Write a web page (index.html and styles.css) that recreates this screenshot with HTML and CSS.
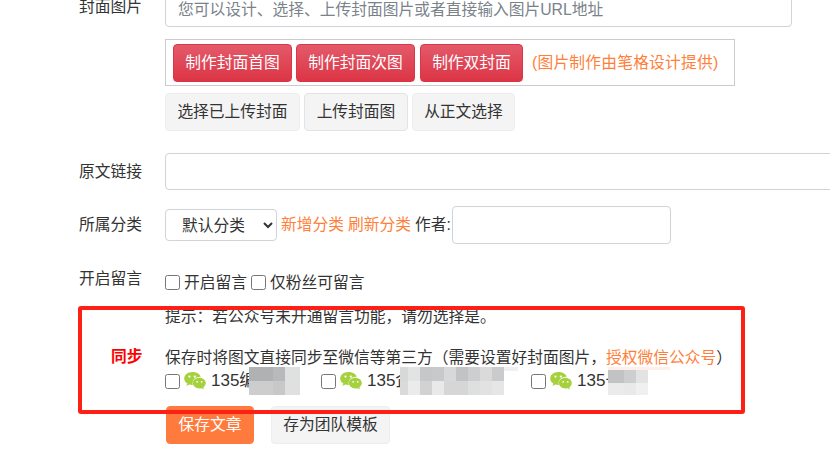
FILE: index.html
```html
<!DOCTYPE html>
<html lang="zh-CN">
<head>
<meta charset="utf-8">
<title>封面与同步设置</title>
<link rel="stylesheet" href="styles.css">
</head>
<body>
<svg class="defs" width="0" height="0" aria-hidden="true">
  <symbol id="wechat" viewBox="0 0 22 18">
    <path fill="#a5d13f" d="M8.3 0C3.8 0 .2 2.9.2 6.5c0 2.1 1.2 3.9 3.1 5.1l-.8 2.4 2.9-1.4c.9.2 1.9.4 2.9.4h.6a6 6 0 0 1-.3-1.8c0-3.6 3.4-6.4 7.6-6.4h.5C15.900 2 12.400 0 8.300 0Z"/>
    <path fill="#a5d13f" d="M21.800 11.100c0-3-3-5.400-6.400-5.400-3.700 0-6.500 2.400-6.500 5.400s2.800 5.400 6.500 5.400c.8 0 1.500-.1 2.300-.3l2.200 1.300-.6-2.100c1.500-1.100 2.500-2.600 2.500-4.300Z"/>
    <circle cx="5.500" cy="4.600" r="1.100" fill="#fff"/><circle cx="10.800" cy="4.600" r="1.100" fill="#fff"/>
    <circle cx="13.200" cy="9.800" r=".9" fill="#fff"/><circle cx="17.700" cy="9.800" r=".9" fill="#fff"/>
  </symbol>
</svg>
<main class="form">
  <div class="row row-cover">
    <label class="label label-top">封面图片</label>
    <div class="field">
      <input class="input input-cover" type="text" placeholder="您可以设计、选择、上传封面图片或者直接输入图片URL地址">
      <div class="maker">
        <button class="btn btn-red btn-first">制作封面首图</button>
        <button class="btn btn-red btn-second">制作封面次图</button>
        <button class="btn btn-red btn-double">制作双封面</button>
        <span class="orange maker-note">(图片制作由笔格设计提供)</span>
      </div>
      <div class="uploads">
        <button class="btn btn-gray btn-a">选择已上传封面</button>
        <button class="btn btn-gray btn-b">上传封面图</button>
        <button class="btn btn-gray btn-c">从正文选择</button>
      </div>
    </div>
  </div>
  <div class="row row-link">
    <label class="label">原文链接</label>
    <input class="input input-link" type="text">
  </div>
  <div class="row row-cat">
    <label class="label">所属分类</label>
    <div class="inline">
      <select class="select"><option>默认分类</option></select>
      <a class="orange link-new">新增分类</a>
      <a class="orange link-refresh">刷新分类</a>
      <span class="author">作者:</span>
      <input class="input input-author" type="text">
    </div>
  </div>
  <div class="row row-comment">
    <label class="label">开启留言</label>
    <div class="checks">
      <input class="check" type="checkbox"><span class="check-text">开启留言</span>
      <input class="check check-next" type="checkbox"><span class="check-text">仅粉丝可留言</span>
    </div>
  </div>
  <p class="hint">提示：若公众号未开通留言功能，请勿选择是。</p>
  <div class="row row-sync">
    <label class="label label-sync">同步</label>
    <div class="field">
      <p class="sync-text">保存时将图文直接同步至微信等第三方（需要设置好封面图片，<a class="orange">授权微信公众号</a>）</p>
      <div class="accounts">
        <div class="account acc-1">
          <input class="check" type="checkbox">
          <svg class="wechat"><use href="#wechat"/></svg>
          <span class="acc-name">135编</span>
          <svg class="mosaic m1" width="51" height="28" aria-hidden="true">
            <rect width="36" height="14" fill="#b0b1b2"/><rect x="24" width="12" height="14" fill="#b8b9ba"/><rect x="36" width="15" height="14" fill="#dfe0e0"/>
            <rect y="14" width="24" height="14" fill="#cdcdcd"/><rect x="24" y="14" width="12" height="14" fill="#c8c8c8"/><rect x="36" y="14" width="15" height="14" fill="#e0e0e0"/>
          </svg>
        </div>
        <div class="account acc-2">
          <input class="check" type="checkbox">
          <svg class="wechat"><use href="#wechat"/></svg>
          <span class="acc-name">135企</span>
          <svg class="mosaic m2" width="118" height="28" aria-hidden="true">
            <rect x="104" width="14" height="4" fill="#f0f0f0"/>
            <rect width="8" height="14" fill="#d8d8d8"/><rect x="8" width="12" height="14" fill="#e2e3e3"/><rect x="20" width="12" height="14" fill="#c6c7c8"/><rect x="32" width="12" height="14" fill="#c8c9ca"/><rect x="44" width="12" height="14" fill="#d8d8d8"/><rect x="56" width="12" height="14" fill="#c2c3c5"/><rect x="68" width="12" height="14" fill="#cdcecf"/><rect x="80" width="12" height="14" fill="#dadada"/><rect x="92" width="12" height="14" fill="#cacbcc"/>
            <rect y="14" width="8" height="14" fill="#dadada"/><rect x="8" y="14" width="12" height="14" fill="#ebebeb"/><rect x="20" y="14" width="12" height="14" fill="#d2d2d2"/><rect x="32" y="14" width="12" height="14" fill="#e9e9e9"/><rect x="44" y="14" width="12" height="14" fill="#d6d6d6"/><rect x="56" y="14" width="12" height="14" fill="#d6d6d6"/><rect x="68" y="14" width="12" height="14" fill="#dedfdf"/><rect x="80" y="14" width="12" height="14" fill="#e2e2e2"/><rect x="92" y="14" width="12" height="14" fill="#e6e6e6"/>
          </svg>
        </div>
        <div class="account acc-3">
          <input class="check" type="checkbox">
          <svg class="wechat"><use href="#wechat"/></svg>
          <span class="acc-name">135号</span>
          <svg class="mosaic m3" width="62" height="28" aria-hidden="true">
            <rect width="62" height="3" fill="#fdf0ea"/>
            <rect y="3" width="16" height="13" fill="#c2c3c5"/><rect x="16" y="3" width="12" height="13" fill="#cdcecf"/><rect x="28" y="3" width="12" height="13" fill="#e2e3e3"/>
            <rect y="16" width="16" height="12" fill="#ebebeb"/><rect x="16" y="16" width="12" height="12" fill="#e9e9e9"/><rect x="28" y="16" width="12" height="12" fill="#f0f0f0"/>
          </svg>
        </div>
      </div>
      <div class="actions">
        <button class="btn btn-save">保存文章</button>
        <button class="btn btn-gray btn-tpl">存为团队模板</button>
      </div>
    </div>
  </div>
</main>
<div class="frame" aria-hidden="true"></div>
</body>
</html>
```

FILE: styles.css
```css
* { box-sizing: border-box; }
html, body { margin: 0; height: 464px; overflow: hidden; background: #fff; }
body {
  position: relative;
  font-family: "Liberation Sans", "Noto Sans CJK SC", sans-serif;
  font-size: 15.75px;
  line-height: 22px;
  color: #333;
}
.defs { position: absolute; }
.form { width: 1000px; margin-top: -9px; padding-left: 79px; }
p { margin: 0; }
.row { display: flex; }
.label { width: 86px; flex: none; align-self: center; }
.label-top { align-self: flex-start; margin-top: 5px; }
.field { display: flex; flex-direction: column; align-items: flex-start; }
.input {
  display: block;
  border: 1px solid #ced4da;
  border-radius: 4px;
  background: #fff;
  font: inherit;
  padding: 1px 12px 0;
}
.input::placeholder { color: #7a828a; }
.input-cover { width: 627px; height: 36px; }
.maker {
  display: flex;
  align-items: center;
  width: 570px;
  height: 47px;
  margin-top: 12px;
  padding-left: 7px;
  border: 1px solid #ccc;
}
.btn {
  height: 38px;
  padding: 0;
  border-radius: 4px;
  font: inherit;
  color: #333;
}
.btn-red {
  border: 1px solid #dc3545;
  background: linear-gradient(#e35a6a, #dc3545);
  color: #fff;
}
.btn-first { width: 119px; }
.btn-second { width: 119px; margin-left: 4px; }
.btn-double { width: 103px; margin-left: 5px; }
.orange { color: #ff7f3a; }
.maker-note { margin-left: 9px; letter-spacing: .2px; }
.uploads { display: flex; margin-top: 7px; }
.btn-gray { border: 1px solid #eee; background: #f4f4f4; }
.btn-a { width: 135px; }
.btn-b { width: 104px; margin-left: 4px; border-color: #e2e4ea; }
.btn-c { width: 103px; margin-left: 4px; }
.row-link { margin-top: 22px; }
.input-link { width: 720px; height: 37px; }
.row-cat { margin-top: 16px; }
.inline { display: flex; align-items: center; height: 38px; }
.select {
  width: 112px;
  height: 32px;
  padding: 0 0 0 12px;
  border: 1px solid #ced4da;
  border-radius: 4px;
  background: #fff;
  font: inherit;
  color: #333;
}
.link-new { margin-left: 4px; }
.link-refresh { margin-left: 4px; }
.author { margin-left: 4px; }
.input-author { width: 219px; height: 38px; margin-left: 1px; }
.row-comment { margin-top: 22px; height: 24px; }
.row-comment .label { align-self: flex-start; margin-top: 2px; }
.checks { display: flex; align-items: center; height: 24px; margin-top: 4px; }
.check { width: 15px; height: 15px; margin: 0; flex: none; }
.check-text { margin-left: 4px; margin-top: 2px; }
.check-next { margin-left: 4px; }
.hint { margin: 16px 0 0 86px; height: 22px; }
.row-sync { margin-top: 19px; }
.label-sync {
  align-self: flex-start;
  margin-top: -1px;
  padding-left: 32px;
  color: #f00;
  font-weight: bold;
}
.sync-text { height: 22px; white-space: nowrap; }
.accounts { display: flex; height: 28px; margin-top: -2px; }
.account { display: flex; align-items: center; width: 156px; flex: none; }
.acc-2 { width: 210px; }
.wechat { width: 22px; height: 18px; margin-left: 4px; flex: none; }
.acc-name { margin-left: 5px; font-size: 17px; white-space: nowrap; }
.mosaic { flex: none; }
.m1 { margin-left: -7px; }
.m2 { margin-left: -12px; }
.m3 { margin-left: -14px; }
.actions { display: flex; margin-top: 11px; }
.btn-save {
  width: 88px;
  margin-left: 1px;
  border: 1px solid #ff7a3d;
  background: #ff7a3d;
  color: #fff;
}
.btn-tpl { width: 119px; margin-left: 17px; }
.frame {
  position: absolute;
  left: 78px;
  top: 306px;
  width: 667px;
  height: 108px;
  border: 4px solid #ff2015;
  border-radius: 3px;
}
```
